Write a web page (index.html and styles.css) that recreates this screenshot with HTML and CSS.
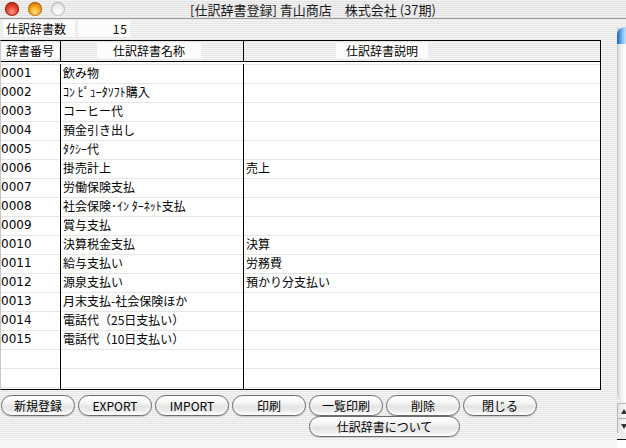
FILE: index.html
```html
<!DOCTYPE html>
<html lang="ja">
<head>
<meta charset="utf-8">
<title>仕訳辞書登録</title>
<link rel="stylesheet" href="styles.css">
</head>
<body>
<div class="window">
  <div class="titlebar">
    <div class="lights">
      <span class="light red"></span>
      <span class="light orange"></span>
      <span class="light gray"></span>
    </div>
    <div class="title">[仕訳辞書登録] 青山商店　株式会社 (37期)</div>
    <div class="title-spacer"></div>
  </div>
  <div class="content">
    <div class="main">
      <div class="count-row">
        <div class="count-label">仕訳辞書数</div>
        <div class="count-value">15</div>
      </div>
      <div class="table">
        <div class="thead">
          <div class="th th-no"><span class="th-label">辞書番号</span></div>
          <div class="th th-name"><span class="th-label">仕訳辞書名称</span></div>
          <div class="th th-desc"><span class="th-label">仕訳辞書説明</span></div>
        </div>
        <div class="tbody">
          <div class="col col-no">
            <div class="cell">0001</div>
            <div class="cell">0002</div>
            <div class="cell">0003</div>
            <div class="cell">0004</div>
            <div class="cell">0005</div>
            <div class="cell">0006</div>
            <div class="cell">0007</div>
            <div class="cell">0008</div>
            <div class="cell">0009</div>
            <div class="cell">0010</div>
            <div class="cell">0011</div>
            <div class="cell">0012</div>
            <div class="cell">0013</div>
            <div class="cell">0014</div>
            <div class="cell">0015</div>
            <div class="cell"></div>
            <div class="cell"></div>
            <div class="cell"></div>
          </div>
          <div class="col col-name">
            <div class="cell">飲み物</div>
            <div class="cell">ｺﾝ ﾋﾟｭｰﾀｿﾌﾄ購入</div>
            <div class="cell">コーヒー代</div>
            <div class="cell">預金引き出し</div>
            <div class="cell">ﾀｸｼｰ代</div>
            <div class="cell">掛売計上</div>
            <div class="cell">労働保険支払</div>
            <div class="cell">社会保険･ｲﾝ ﾀｰﾈｯﾄ支払</div>
            <div class="cell">賞与支払</div>
            <div class="cell">決算税金支払</div>
            <div class="cell">給与支払い</div>
            <div class="cell">源泉支払い</div>
            <div class="cell">月末支払-社会保険ほか</div>
            <div class="cell">電話代（25日支払い）</div>
            <div class="cell">電話代（10日支払い）</div>
            <div class="cell"></div>
            <div class="cell"></div>
            <div class="cell"></div>
          </div>
          <div class="col col-desc">
            <div class="cell"></div>
            <div class="cell"></div>
            <div class="cell"></div>
            <div class="cell"></div>
            <div class="cell"></div>
            <div class="cell">売上</div>
            <div class="cell"></div>
            <div class="cell"></div>
            <div class="cell"></div>
            <div class="cell">決算</div>
            <div class="cell">労務費</div>
            <div class="cell">預かり分支払い</div>
            <div class="cell"></div>
            <div class="cell"></div>
            <div class="cell"></div>
            <div class="cell"></div>
            <div class="cell"></div>
            <div class="cell"></div>
          </div>
        </div>
      </div>
      <div class="buttons">
        <button class="btn">新規登録</button>
        <button class="btn">EXPORT</button>
        <button class="btn">IMPORT</button>
        <button class="btn">印刷</button>
        <button class="btn">一覧印刷</button>
        <button class="btn">削除</button>
        <button class="btn">閉じる</button>
        <button class="btn btn-wide">仕訳辞書について</button>
      </div>
      <div class="footer"></div>
    </div>
    <div class="scrollbar">
      <div class="sb-thumb">
        <div class="sb-cap"></div>
      </div>
      <div class="sb-arrows">
        <div class="sb-arrow"><span class="tri-up"></span></div>
        <div class="sb-arrow sb-arrow-down"><span class="tri-down"></span></div>
      </div>
      <div class="sb-rest"></div>
      <div class="sb-grip"></div>
    </div>
  </div>
</div>
</body>
</html>
```

FILE: styles.css
```css
* { box-sizing: border-box; }

body {
  margin: 0;
  width: 626px;
  height: 448px;
  overflow: hidden;
  font-family: "Noto Sans CJK JP", sans-serif;
  font-size: 12px;
  color: #000;
}

.window {
  width: 626px;
  height: 448px;
  display: flex;
  flex-direction: column;
  background: repeating-linear-gradient(to bottom, #f5f5f5 0px, #f5f5f5 1px, #e6e6e6 1px, #e6e6e6 2px);
}

/* title bar */
.titlebar {
  height: 19px;
  flex: none;
  display: grid;
  grid-template-columns: 1fr auto 1fr;
  align-items: center;
  border-bottom: 1px solid #9c9c9c;
  background: repeating-linear-gradient(to bottom, #f2f2f2 0px, #f2f2f2 1px, #e2e2e2 1px, #e2e2e2 2px);
}

.lights {
  display: flex;
  gap: 9px;
  padding-left: 5px;
  align-self: start;
  padding-top: 2px;
}

.light {
  width: 14px;
  height: 14px;
  border-radius: 50%;
  display: block;
}

.light.red {
  background: radial-gradient(circle at 50% 70%, #ff9a86 0%, #e4402e 45%, #a8160c 100%);
  box-shadow: inset 0 0 0 1px rgba(110, 20, 10, 0.55);
}

.light.orange {
  background: radial-gradient(circle at 50% 70%, #ffe48a 0%, #f5a21a 45%, #b86008 100%);
  box-shadow: inset 0 0 0 1px rgba(130, 70, 0, 0.5);
}

.light.gray {
  background: radial-gradient(circle at 50% 70%, #ffffff 0%, #ececec 50%, #cfcfcf 100%);
  box-shadow: inset 0 0 0 1px rgba(0, 0, 0, 0.18);
}

.title {
  font-size: 13px;
  line-height: 17px;
  color: #1a1a1a;
  white-space: nowrap;
  padding-top: 0;
}

/* content */
.content {
  flex: 1;
  display: flex;
  min-height: 0;
}

.main {
  width: 617px;
  flex: none;
  display: flex;
  flex-direction: column;
}

.count-row {
  height: 21px;
  display: flex;
  gap: 3px;
  padding-left: 3px;
  padding-top: 1px;
}

.count-label,
.count-value {
  height: 17px;
  line-height: 17px;
  background: #fcfcfc;
}

.count-label {
  width: 72px;
  padding-left: 3px;
}

.count-value {
  width: 52px;
  text-align: right;
  padding-right: 2px;
  letter-spacing: 1px;
}

/* table */
.table {
  width: 601px;
  border: 1px solid #000;
  border-left-color: #c8c8c8;
  background: transparent;
}

.thead {
  display: grid;
  grid-template-columns: 60px 183px 356px;
  height: 21px;
  border-bottom: 1px solid #000;
}

.th {
  border-right: 1px solid #000;
  padding-top: 2px;
  display: flex;
  align-items: flex-start;
}

.th-desc { border-right: none; }

.th-label {
  display: block;
  height: 16px;
  line-height: 16px;
  background: #fcfcfc;
  white-space: nowrap;
}

.th-no .th-label {
  width: 58px;
  padding-left: 5px;
}

.th-name .th-label {
  margin-left: 36px;
  width: 104px;
  text-align: center;
}

.th-desc .th-label {
  margin-left: 92px;
  width: 92px;
  text-align: center;
}

.tbody {
  display: grid;
  grid-template-columns: 60px 183px 356px;
  height: 327px;
  overflow: hidden;
  background: #fff;
  padding-top: 2px;
}

.col {
  border-right: 1px solid #000;
  display: flex;
  flex-direction: column;
}

.col-desc { border-right: none; }

.cell {
  flex: none;
  height: 19px;
  border-top: 1px solid #e6e6e6;
  line-height: 16px;
  white-space: nowrap;
  overflow: hidden;
}

.col-no .cell {
  font-family: "DejaVu Sans", "Noto Sans CJK JP", sans-serif;
  padding-left: 0;
}

.col-name .cell,
.col-desc .cell {
  padding-left: 2px;
}

/* buttons */
.buttons {
  margin-top: 5px;
  padding-left: 1px;
  display: grid;
  grid-template-columns: repeat(7, 74px);
  grid-auto-rows: 21px;
  column-gap: 3px;
  row-gap: 0;
}

.btn {
  font-family: "Noto Sans CJK JP", sans-serif;
  font-size: 12px;
  color: #000;
  height: 21px;
  padding: 0;
  line-height: 19px;
  border: 1px solid #6c6c6c;
  border-radius: 11px;
  background: linear-gradient(to bottom, #ffffff 0%, #f6f6f6 35%, #e4e4e4 55%, #ececec 80%, #fbfbfb 100%);
  box-shadow: 0 1px 1px rgba(0, 0, 0, 0.18), inset 0 -2px 2px rgba(255, 255, 255, 0.9);
}

.btn-wide {
  grid-column: 5 / span 2;
}

.footer {
  flex: 1;
  background: linear-gradient(to bottom, rgba(255, 255, 255, 0.2), rgba(255, 255, 255, 0.6));
}

/* scrollbar */
.scrollbar {
  flex: 1;
  display: flex;
  flex-direction: column;
  padding-top: 8px;
}

.sb-thumb {
  flex: 1;
  border-bottom-left-radius: 8px;
  background: linear-gradient(to right, #c4c4c4 0px, #e2e2e2 2px, #f4f4f4 5px, #ffffff 9px);
  overflow: hidden;
}

.sb-cap {
  height: 17px;
  border-top-left-radius: 8px;
  background: linear-gradient(to right, #1f5fb8 0px, #4f95e4 3px, #8ec4f6 6px, #c2e2fd 9px);
}

.sb-arrows {
  height: 30px;
  margin-top: 1px;
  border-top: 1px solid #b8b8b8;
  border-left: 1px solid #b8b8b8;
  background: linear-gradient(to right, #e4e4e4, #fafafa);
  display: flex;
  flex-direction: column;
}

.sb-arrow {
  flex: 1;
  display: flex;
  align-items: center;
  padding-left: 3px;
}

.sb-arrow-down {
  border-top: 1px solid #b0b0b0;
}

.tri-up {
  width: 0;
  height: 0;
  border-left: 3px solid transparent;
  border-right: 3px solid transparent;
  border-bottom: 5px solid #333;
}

.tri-down {
  width: 0;
  height: 0;
  border-left: 3px solid transparent;
  border-right: 3px solid transparent;
  border-top: 5px solid #333;
}

.sb-rest {
  height: 6px;
}

.sb-grip {
  height: 9px;
  border-top: 1px solid #111;
  background: #fff;
}
```
